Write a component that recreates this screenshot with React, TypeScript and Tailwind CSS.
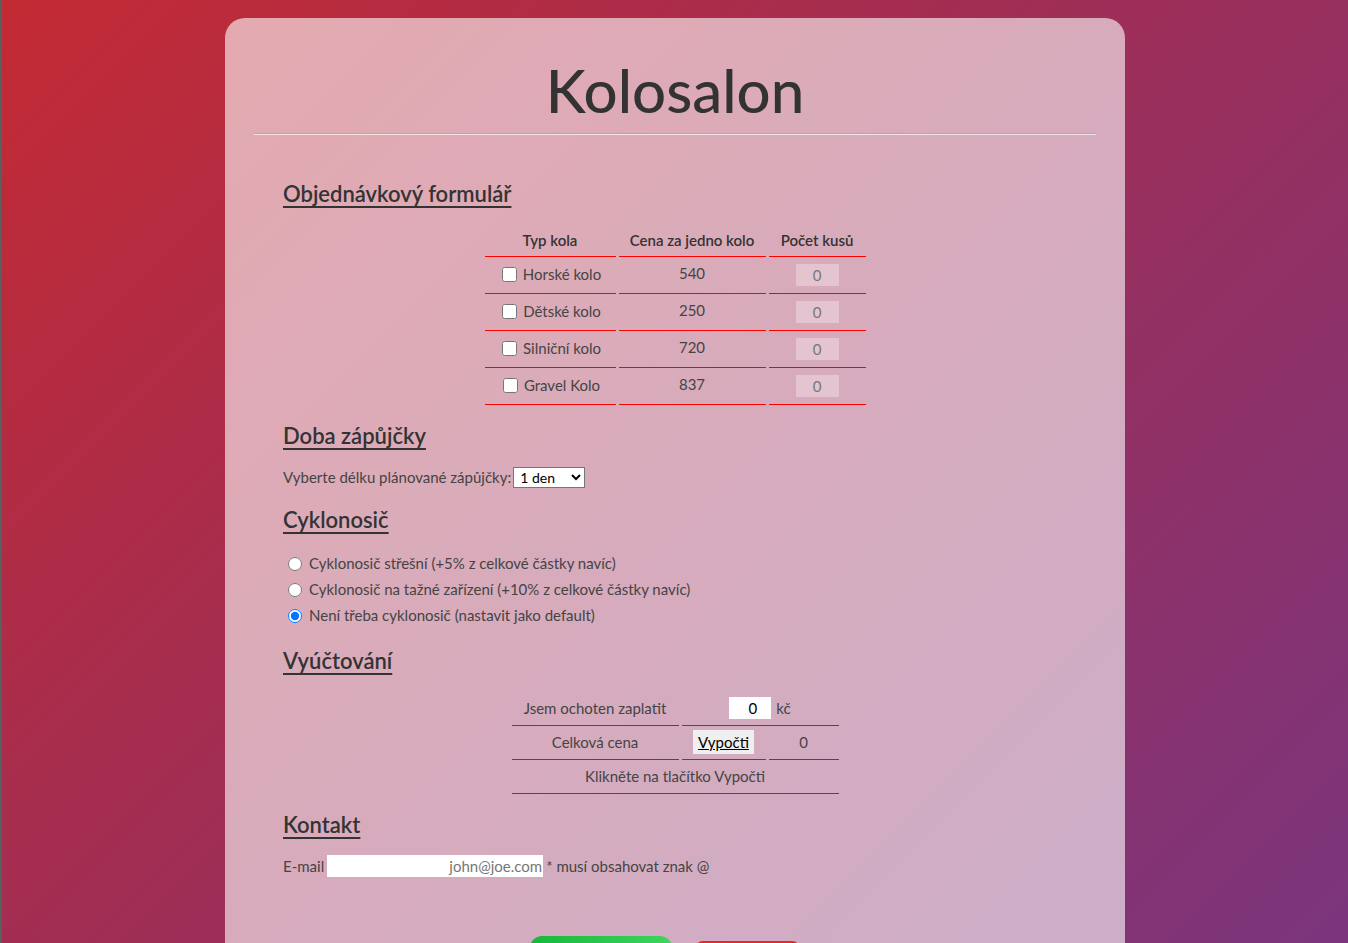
import React from 'react';

const bikes = [
  { name: 'Horské kolo', price: 540 },
  { name: 'Dětské kolo', price: 250 },
  { name: 'Silniční kolo', price: 720 },
  { name: 'Gravel Kolo', price: 837 },
];

const SectionTitle: React.FC<{ children: React.ReactNode; className?: string }> = ({ children, className }) => (
  <h2 className={`text-[22px] font-semibold text-[#333] underline underline-offset-[4px] decoration-[1.5px] leading-none ${className ?? ''}`}>
    {children}
  </h2>
);

export default function App() {
  return (
    <div
      className="min-h-screen border-l-2 border-[#56605e] bg-[linear-gradient(135deg,#c32a33_0%,#a02e55_45%,#7a357e_100%)] pt-[18px] text-[15px] text-[#444]"
      style={{ fontFamily: 'Lato, "Noto Sans", sans-serif' }}
    >
      <div className="mx-auto h-[960px] w-[900px] rounded-t-[20px] bg-white/60 px-[29px] pb-[40px]">
        <h1 className="pt-[42px] text-center text-[60px] font-medium leading-[60px] text-[#333]">Kolosalon</h1>
        <div className="mt-[13px] h-[2px] border-t border-[#a9a9a9] bg-white/70" />

        <div className="px-[29px]">
          <SectionTitle className="mt-[48px]">Objednávkový formulář</SectionTitle>

          <table className="mx-auto mt-[20px] border-separate border-spacing-x-[3px] border-spacing-y-0 text-center">
            <thead>
              <tr className="h-[32px]">
                <th className="w-[131px] border-b border-[#f00] font-semibold text-[#333]">Typ kola</th>
                <th className="w-[147px] border-b border-[#f00] font-semibold text-[#333]">Cena za jedno kolo</th>
                <th className="w-[97px] border-b border-[#f00] font-semibold text-[#333]">Počet kusů</th>
              </tr>
            </thead>
            <tbody>
              {bikes.map((b) => (
                <tr key={b.name} className="h-[37px]">
                  <td className="border-b border-[#f00]">
                    <label className="inline-flex items-center gap-[6px] pl-[3px]">
                      <input type="checkbox" className="h-[15px] w-[15px]" />
                      <span>{b.name}</span>
                    </label>
                  </td>
                  <td className="border-b border-[#f00] pb-[4px]">{b.price}</td>
                  <td className="border-b border-[#f00]">
                    <div className="mx-auto flex h-[22px] w-[43px] items-center justify-center bg-white/30 text-[#777]">0</div>
                  </td>
                </tr>
              ))}
            </tbody>
          </table>

          <SectionTitle className="mt-[20px]">Doba zápůjčky</SectionTitle>
          <div className="mt-[19px] flex items-center gap-[2px]">
            <span>Vyberte délku plánované zápůjčky:</span>
            <select className="h-[21px] w-[72px] border border-[#767676] bg-white px-[2px] text-[14px] text-black">
              <option>1 den</option>
              <option>2 dny</option>
              <option>7 dní</option>
            </select>
          </div>

          <SectionTitle className="mt-[20px]">Cyklonosič</SectionTitle>
          <div className="mt-[23px] flex flex-col gap-[6px] pl-[5px]">
            <label className="flex h-[20px] items-center gap-[7px]">
              <input type="radio" name="nosic" className="h-[14px] w-[14px]" />
              <span>Cyklonosič střešní (+5% z celkové částky navíc)</span>
            </label>
            <label className="flex h-[20px] items-center gap-[7px]">
              <input type="radio" name="nosic" className="h-[14px] w-[14px]" />
              <span>Cyklonosič na tažné zařízení (+10% z celkové částky navíc)</span>
            </label>
            <label className="flex h-[20px] items-center gap-[7px]">
              <input type="radio" name="nosic" defaultChecked className="h-[14px] w-[14px]" />
              <span>Není třeba cyklonosič (nastavit jako default)</span>
            </label>
          </div>

          <SectionTitle className="mt-[24px]">Vyúčtování</SectionTitle>
          <table className="mx-auto mt-[20px] border-separate border-spacing-x-[3px] border-spacing-y-0 text-center">
            <tbody>
              <tr className="h-[34px]">
                <td className="w-[167px] border-b border-[#f00]">Jsem ochoten zaplatit</td>
                <td colSpan={2} className="border-b border-[#f00]">
                  <div className="flex items-center justify-center gap-[5px]">
                    <span className="flex h-[22px] w-[42px] items-center justify-end bg-white pr-[14px] text-black">0</span>
                    <span>kč</span>
                  </div>
                </td>
              </tr>
              <tr className="h-[34px]">
                <td className="border-b border-[#f00]">Celková cena</td>
                <td className="w-[84px] border-b border-[#f00]">
                  <button className="h-[24px] bg-[#efefef] px-[5px] text-black underline">Vypočti</button>
                </td>
                <td className="w-[70px] border-b border-[#f00]">0</td>
              </tr>
              <tr className="h-[34px]">
                <td colSpan={3} className="border-b border-[#f00]">Klikněte na tlačítko Vypočti</td>
              </tr>
            </tbody>
          </table>

          <SectionTitle className="mt-[20px]">Kontakt</SectionTitle>
          <div className="mt-[19px] flex items-center gap-[3px]">
            <span>E-mail</span>
            <input
              type="email"
              placeholder="john@joe.com"
              className="h-[22px] w-[216px] bg-white px-[1px] text-right text-[15px] placeholder:text-[#777]"
            />
            <span>* musí obsahovat znak @</span>
          </div>

          <div className="mt-[59px] flex justify-center gap-[23px] pr-[20px]">
            <button className="h-[44px] w-[142px] rounded-[12px] bg-[linear-gradient(90deg,#16b83a,#3fd45f)] pt-[20px] text-white">Odeslat</button>
            <button className="mt-[5px] h-[44px] w-[105px] rounded-[8px] bg-[#e8262c] pt-[20px] text-white">Zrušit</button>
          </div>
        </div>
      </div>
    </div>
  );
}
